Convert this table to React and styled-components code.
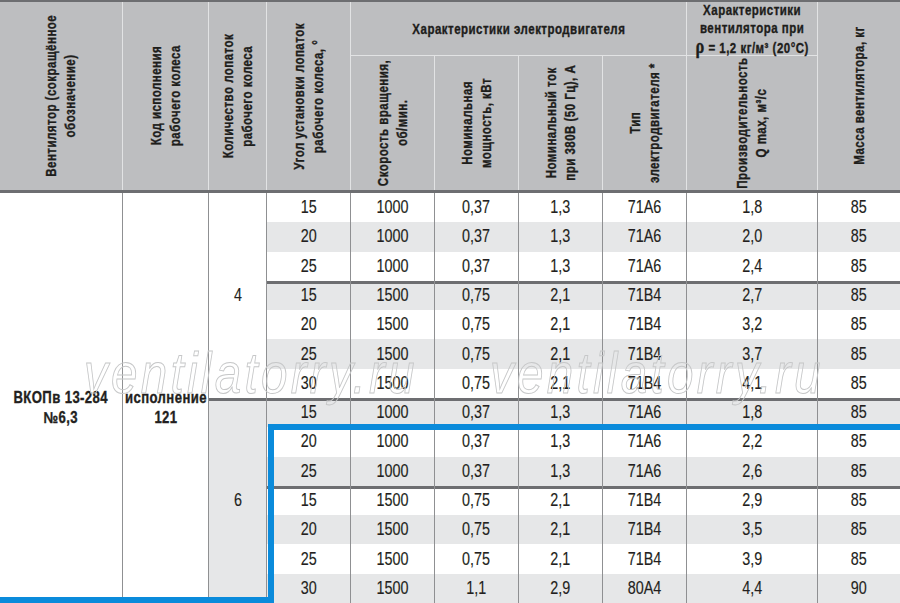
import React from "react";
import styled, { createGlobalStyle } from "styled-components";

const GlobalStyle = createGlobalStyle`
  html, body {
    margin: 0;
    padding: 0;
    background: #fff;
  }
  body {
    width: 900px;
    height: 603px;
    overflow: hidden;
  }
`;

const COLS = "123px 86px 58px 84px 84px 84px 84px 84px 131px 82px";
const SANS = `"Liberation Sans", Arial, sans-serif`;
// no condensed Helvetica here, so Arial metrics squeezed to ~82%
const SQUEEZE = 0.82;

const Page = styled.div`
  position: relative;
  width: 900px;
  height: 603px;
  overflow: hidden;
  font-family: ${SANS};
  color: #231f20;
`;

const Squeeze = styled.span`
  display: inline-block;
  white-space: nowrap;
  transform: scaleX(${SQUEEZE});
`;

const Head = styled.div`
  display: grid;
  grid-template-columns: ${COLS};
  grid-template-rows: 54px 134px;
  background: #bdbec0;
  border-top: 2px solid #6d6e71;
  border-bottom: 3px solid #6d6e71;
`;

const HeadCell = styled.div`
  grid-column: ${(p) => p.col};
  grid-row: ${(p) => p.row};
  display: flex;
  align-items: center;
  justify-content: center;
  border-right: ${(p) => (p.last ? "none" : "1px solid #e2e3e4")};
  border-bottom: ${(p) => (p.group ? "1px solid #e2e3e4" : "none")};
  font-weight: bold;
  font-size: 14px;
  letter-spacing: 0.6px;
  line-height: 18px;
  text-align: center;
  color: #1d1d1b;
  -webkit-text-stroke: 0.35px #1d1d1b;
`;

const Vertical = styled.span`
  display: inline-block;
  white-space: nowrap;
  writing-mode: vertical-rl;
  transform: rotate(180deg) scaleY(${SQUEEZE});
  text-align: center;
  line-height: 19px;
`;

const Rho = styled.span`
  font-family: "Liberation Serif", serif;
  font-size: 20px;
  font-weight: bold;
`;

const Body = styled.div`
  display: grid;
  grid-template-columns: ${COLS};
  grid-template-rows: repeat(14, 1fr);
  height: 410px;
`;

const Cell = styled.div`
  grid-column: ${(p) => p.col || "auto"};
  grid-row: ${(p) => p.rows || "auto"};
  display: flex;
  align-items: center;
  justify-content: center;
  background: ${(p) => (p.shade ? "#e6e7e8" : "#fff")};
  border-right: ${(p) => (p.last ? "none" : "1px solid #8f9092")};
  box-shadow: ${(p) => (p.sep ? "inset 0 3px 0 #6d6e71" : "none")};
  font-size: 17.5px;
  -webkit-text-stroke: 0.15px #231f20;
`;

const NameCell = styled(Cell)`
  padding-top: 20px;
  font-weight: bold;
  font-size: 16px;
  line-height: 20px;
  letter-spacing: 0.5px;
  text-align: center;
  -webkit-text-stroke: 0.35px #231f20;
`;

const Highlight = styled.div`
  position: absolute;
  left: 268px;
  top: 424px;
  right: 0;
  bottom: 0;
  border-top: 6px solid #0a8bdb;
  border-left: 6px solid #0a8bdb;
  pointer-events: none;
`;

const HighlightBase = styled.div`
  position: absolute;
  left: 0;
  bottom: 0;
  width: 274px;
  height: 6px;
  background: #0a8bdb;
`;

const Watermark = styled.div`
  position: absolute;
  left: ${(p) => p.x}px;
  top: 344px;
  font-family: ${SANS};
  font-style: italic;
  font-size: 58px;
  line-height: 1;
  letter-spacing: 4px;
  color: transparent;
  -webkit-text-stroke: 1px #c6c7c8;
  pointer-events: none;
  white-space: nowrap;
  transform: scaleX(${SQUEEZE});
  transform-origin: left center;
`;

const rows = [
  ["15", "1000", "0,37", "1,3", "71А6", "1,8", "85"],
  ["20", "1000", "0,37", "1,3", "71А6", "2,0", "85"],
  ["25", "1000", "0,37", "1,3", "71А6", "2,4", "85"],
  ["15", "1500", "0,75", "2,1", "71В4", "2,7", "85"],
  ["20", "1500", "0,75", "2,1", "71В4", "3,2", "85"],
  ["25", "1500", "0,75", "2,1", "71В4", "3,7", "85"],
  ["30", "1500", "0,75", "2,1", "71В4", "4,1", "85"],
  ["15", "1000", "0,37", "1,3", "71А6", "1,8", "85"],
  ["20", "1000", "0,37", "1,3", "71А6", "2,2", "85"],
  ["25", "1000", "0,37", "1,3", "71А6", "2,6", "85"],
  ["15", "1500", "0,75", "2,1", "71В4", "2,9", "85"],
  ["20", "1500", "0,75", "2,1", "71В4", "3,5", "85"],
  ["25", "1500", "0,75", "2,1", "71В4", "3,9", "85"],
  ["30", "1500", "1,1", "2,9", "80А4", "4,4", "90"],
];

const separators = [3, 7, 10];

function DataRow({ values, index }) {
  const shade = index % 2 === 1;
  const sep = separators.includes(index);
  return values.map((v, j) => (
    <Cell
      key={j}
      col={j + 4}
      rows={index + 1}
      shade={shade}
      sep={sep}
      last={j === values.length - 1}
    >
      <Squeeze>{v}</Squeeze>
    </Cell>
  ));
}

export default function App() {
  return (
    <Page>
      <GlobalStyle />
      <Head>
        <HeadCell col={1} row="1 / 3">
          <Vertical>
            Вентилятор (сокращённое
            <br />
            обозначение)
          </Vertical>
        </HeadCell>
        <HeadCell col={2} row="1 / 3">
          <Vertical>
            Код исполнения
            <br />
            рабочего колеса
          </Vertical>
        </HeadCell>
        <HeadCell col={3} row="1 / 3">
          <Vertical>
            Количество лопаток
            <br />
            рабочего колеса
          </Vertical>
        </HeadCell>
        <HeadCell col={4} row="1 / 3">
          <Vertical>
            Угол установки лопаток
            <br />
            рабочего колеса, °
          </Vertical>
        </HeadCell>
        <HeadCell col="5 / 9" row={1} group>
          <Squeeze>Характеристики электродвигателя</Squeeze>
        </HeadCell>
        <HeadCell col={9} row={1} group>
          <Squeeze>
            Характеристики
            <br />
            вентилятора при
            <br />
            <Rho>ρ</Rho> = 1,2 кг/м³ (20°C)
          </Squeeze>
        </HeadCell>
        <HeadCell col={10} row="1 / 3" last>
          <Vertical>Масса вентилятора, кг</Vertical>
        </HeadCell>
        <HeadCell col={5} row={2}>
          <Vertical>
            Скорость вращения,
            <br />
            об/мин.
          </Vertical>
        </HeadCell>
        <HeadCell col={6} row={2}>
          <Vertical>
            Номинальная
            <br />
            мощность, кВт
          </Vertical>
        </HeadCell>
        <HeadCell col={7} row={2}>
          <Vertical>
            Номинальный ток
            <br />
            при 380В (50 Гц), А
          </Vertical>
        </HeadCell>
        <HeadCell col={8} row={2}>
          <Vertical>
            Тип
            <br />
            электродвигателя *
          </Vertical>
        </HeadCell>
        <HeadCell col={9} row={2}>
          <Vertical>
            Производительность
            <br />
            Q max, м³/с
          </Vertical>
        </HeadCell>
      </Head>
      <Body>
        <NameCell col={1} rows="1 / 15">
          <Squeeze>
            ВКОПв 13-284
            <br />
            №6,3
          </Squeeze>
        </NameCell>
        <NameCell col={2} rows="1 / 15">
          <Squeeze>
            исполнение
            <br />
            121
          </Squeeze>
        </NameCell>
        <Cell col={3} rows="1 / 8">
          <Squeeze>4</Squeeze>
        </Cell>
        <Cell col={3} rows="8 / 15" shade sep>
          <Squeeze>6</Squeeze>
        </Cell>
        {rows.map((r, i) => (
          <DataRow key={i} values={r} index={i} />
        ))}
      </Body>
      <Watermark x={84}>ventilatorry.ru</Watermark>
      <Watermark x={490}>ventilatorry.ru</Watermark>
      <Highlight />
      <HighlightBase />
    </Page>
  );
}
